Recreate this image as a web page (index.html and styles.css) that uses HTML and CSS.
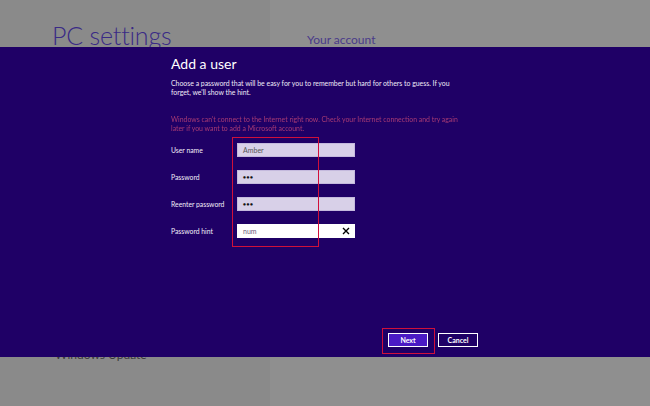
FILE: index.html
```html
<!DOCTYPE html>
<html>
<head>
<meta charset="utf-8">
<link rel="stylesheet" href="styles.css">
</head>
<body>
<div class="screen">
  <section class="col col-left">
    <h1 class="app-title">PC settings</h1>
    <div class="nav-item">Windows Update</div>
  </section>
  <section class="col col-right">
    <h2 class="page-title">Your account</h2>
  </section>
  <div class="overlay">
    <div class="dialog">
      <div class="dlg-title">Add a user</div>
      <p class="dlg-text">Choose a password that will be easy for you to remember but hard for others to guess. If you forget, we'll show the hint.</p>
      <p class="dlg-error">Windows can't connect to the Internet right now. Check your Internet connection and try again later if you want to add a Microsoft account.</p>
      <div class="form">
        <label class="lbl">User name</label>
        <div class="field">Amber</div>
        <label class="lbl">Password</label>
        <div class="field dots">&#9679;&#9679;&#9679;</div>
        <label class="lbl">Reenter password</label>
        <div class="field dots">&#9679;&#9679;&#9679;</div>
        <label class="lbl">Password hint</label>
        <div class="field active"><span>num</span><svg class="clear" width="8" height="8" viewBox="0 0 8 8"><path d="M1 1L7 7M7 1L1 7" stroke="#000" stroke-width="1.4" fill="none"/></svg></div>
      </div>
      <div class="actions">
        <button class="btn btn-primary">Next</button>
        <button class="btn">Cancel</button>
      </div>
      <div class="mark mark-fields"></div>
      <div class="mark mark-next"></div>
    </div>
  </div>
</div>
</body>
</html>
```
FILE: styles.css
```css
html, body {
  margin: 0;
  padding: 0;
}
body {
  font-family: Lato, "Open Sans", sans-serif;
  overflow: hidden;
}
.screen {
  position: relative;
  width: 650px;
  height: 406px;
  display: flex;
}
.col {
  height: 100%;
}
.col-left {
  width: 270px;
  background: #8a8a8a;
}
.col-right {
  flex: 1;
  background: #8f8f8f;
}
.app-title {
  margin: 0;
  padding: 20px 0 0 52px;
  font-size: 25px;
  line-height: 30px;
  font-weight: 300;
  color: #3a2a86;
  letter-spacing: -0.2px;
}
.nav-item {
  margin-top: 297px;
  padding-left: 55px;
  font-size: 12px;
  line-height: 16px;
  font-weight: 400;
  color: #3a3a3a;
}
.page-title {
  margin: 0;
  padding: 32px 0 0 37px;
  font-size: 12px;
  line-height: 16px;
  font-weight: 400;
  color: #4a3a8a;
}
.overlay {
  position: absolute;
  left: 0;
  right: 0;
  top: 47px;
  height: 310px;
  background: #1f0066;
}
.dialog {
  position: relative;
  margin-left: 171px;
  width: 307px;
  height: 100%;
  box-sizing: border-box;
  padding: 8px 0 10px;
  display: flex;
  flex-direction: column;
  color: #fff;
}
.dlg-title {
  font-size: 14px;
  line-height: 18px;
  font-weight: 400;
}
.dlg-text {
  margin: 6px 0 0;
  width: 290px;
  font-size: 6.9px;
  line-height: 9px;
  color: #efeaf7;
}
.dlg-error {
  margin: 18px 0 0;
  width: 290px;
  font-size: 6.9px;
  line-height: 9px;
  color: #a83a74;
  filter: blur(0.7px);
}
.form {
  margin-top: 10px;
  display: grid;
  grid-template-columns: 66px 118px;
  grid-auto-rows: 14px;
  row-gap: 13px;
  align-items: center;
}
.lbl {
  font-size: 6.8px;
  line-height: 14px;
  color: #f2eef8;
  white-space: nowrap;
}
.field {
  height: 14px;
  box-sizing: border-box;
  background: #d8d0e8;
  border: 1px solid #c4b9dd;
  padding: 0 5px;
  font-size: 7px;
  line-height: 12px;
  color: #555;
  display: flex;
  align-items: center;
  justify-content: space-between;
}
.field.dots {
  color: #111;
  font-size: 5px;
  letter-spacing: 0.5px;
}
.field.active {
  background: #fff;
  border-color: #fff;
  color: #6a5a7a;
}
.clear {
  display: block;
  margin-right: -1px;
}
.actions {
  margin-top: auto;
  display: flex;
  justify-content: flex-end;
  gap: 10px;
}
.btn {
  width: 40px;
  height: 14px;
  margin: 0;
  padding: 0;
  box-sizing: border-box;
  border: 1px solid #fff;
  background: #1f0066;
  color: #fff;
  font-family: Lato, "Open Sans", sans-serif;
  font-size: 7px;
  font-weight: 700;
  line-height: 12px;
}
.btn-primary {
  background: #4a1ac4;
}
.mark {
  position: absolute;
  border: 1px solid #d0103a;
  box-sizing: border-box;
}
.mark-fields {
  left: 61px;
  top: 90px;
  width: 87px;
  height: 110px;
}
.mark-next {
  left: 211px;
  top: 281px;
  width: 53px;
  height: 26px;
}
```
